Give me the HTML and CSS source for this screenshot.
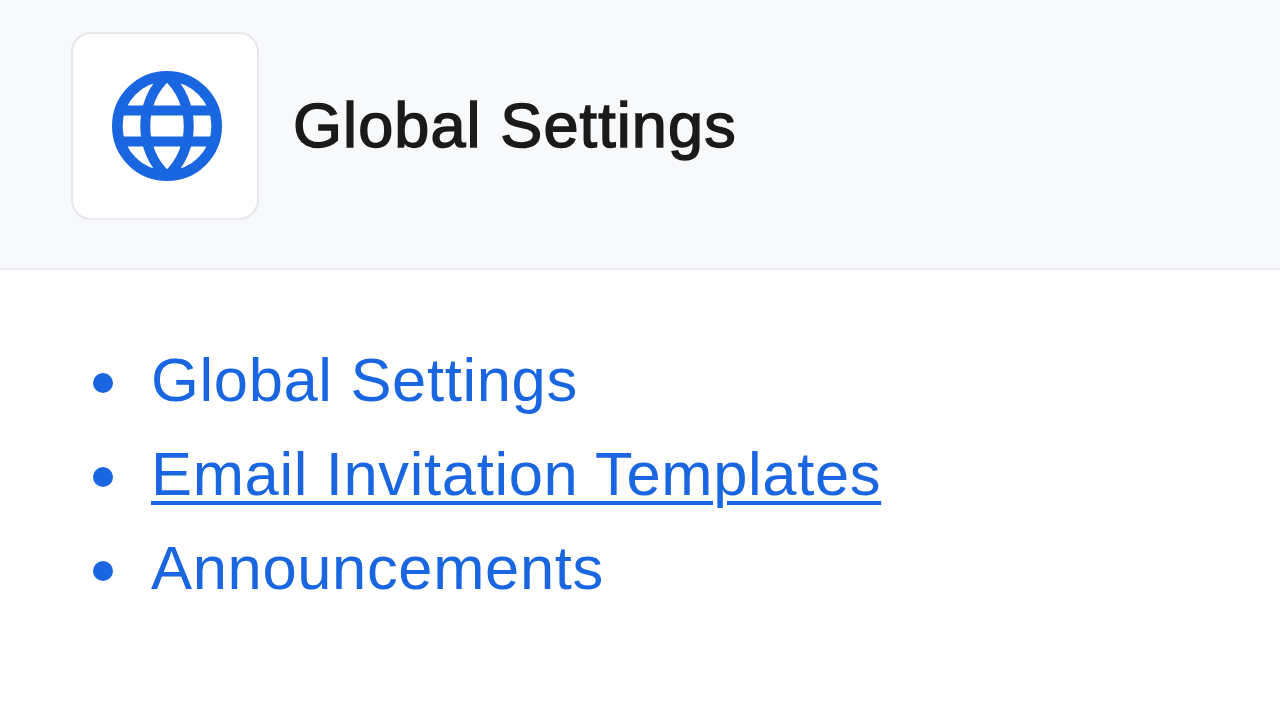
FILE: index.html
```html
<!DOCTYPE html>
<html>
<head>
    <title>Global Settings</title>
    <link rel="stylesheet" href="styles.css">
</head>
<body>
    <div class="header">
        <div class="icon-box">
            <svg class="globe" width="110" height="110" viewBox="0 0 110 110" fill="none" stroke="#1a66e0" stroke-width="10">
                <circle cx="55" cy="55" r="49.7" stroke-width="10.6"/>
                <path d="M55 5C26 30 26 80 55 105M55 5C84 30 84 80 55 105"/>
                <path d="M8 39.5H102M8 70.5H102"/>
            </svg>
        </div>
        <h1>Global Settings</h1>
    </div>
    <ul class="links">
        <li><a href="#">Global Settings</a></li>
        <li><a href="#" class="hover">Email Invitation Templates</a></li>
        <li><a href="#">Announcements</a></li>
    </ul>
</body>
</html>
```

FILE: styles.css
```css
body {
    margin: 0;
    background-color: #fff;
    font-family: "Liberation Sans", Arial, sans-serif;
}

.header {
    display: flex;
    align-items: flex-start;
    gap: 34px;
    height: 236px;
    padding: 32px 0 0 71px;
    background-color: #f8f9fb;
    border-bottom: 2px solid #e5e7eb;
}

.icon-box {
    display: flex;
    align-items: center;
    justify-content: center;
    width: 184px;
    height: 184px;
    background-color: #fff;
    border: 2px solid #e5e7eb;
    border-radius: 20px;
}

.globe {
    margin-left: 3px;
}

h1 {
    margin: 0;
    font-size: 63px;
    line-height: 186px;
    font-weight: 400;
    letter-spacing: 1.1px;
    color: #1a1a1a;
    -webkit-text-stroke: 1.5px #1a1a1a;
}

.links {
    list-style: none;
    margin: 63px 0 0;
    padding-left: 93px;
    font-size: 61.5px;
    line-height: 94px;
    letter-spacing: 0.65px;
}

.links li {
    display: flex;
    align-items: center;
    gap: 38px;
}

.links li::before {
    content: "";
    width: 20px;
    height: 20px;
    margin-top: 6px;
    border-radius: 50%;
    background-color: #1a66e0;
}

.links a {
    color: #1a66e0;
    text-decoration: none;
}

.links a.hover {
    text-decoration: underline;
    text-decoration-thickness: 4px;
    text-underline-offset: 6px;
}
```
